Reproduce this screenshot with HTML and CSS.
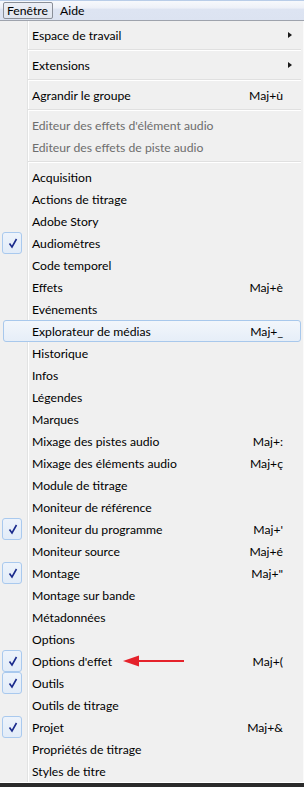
FILE: index.html
```html
<!DOCTYPE html>
<html lang="fr">
<head>
<meta charset="utf-8">
<link rel="stylesheet" href="styles.css">
</head>
<body>
<div class="menubar">
  <span class="mb-item open">Fenêtre</span>
  <span class="mb-item">Aide</span>
</div>
<div class="menu">
  <div class="item"><span class="chk"></span><span class="label">Espace de travail</span><span class="key"></span><span class="sub"><i class="tri"></i></span></div>
  <div class="sep"></div>
  <div class="item"><span class="chk"></span><span class="label">Extensions</span><span class="key"></span><span class="sub"><i class="tri"></i></span></div>
  <div class="sep"></div>
  <div class="item"><span class="chk"></span><span class="label">Agrandir le groupe</span><span class="key">Maj+ù</span><span class="sub"></span></div>
  <div class="sep"></div>
  <div class="item disabled"><span class="chk"></span><span class="label">Editeur des effets d'élément audio</span><span class="key"></span><span class="sub"></span></div>
  <div class="item disabled"><span class="chk"></span><span class="label">Editeur des effets de piste audio</span><span class="key"></span><span class="sub"></span></div>
  <div class="sep"></div>
  <div class="item"><span class="chk"></span><span class="label">Acquisition</span><span class="key"></span><span class="sub"></span></div>
  <div class="item"><span class="chk"></span><span class="label">Actions de titrage</span><span class="key"></span><span class="sub"></span></div>
  <div class="item"><span class="chk"></span><span class="label">Adobe Story</span><span class="key"></span><span class="sub"></span></div>
  <div class="item"><span class="chk on"><svg viewBox="0 0 21 22" width="21" height="22"><path d="M7.5 11.5 L10 15 L14.5 7" fill="none" stroke="#1a2a8c" stroke-width="1.6"/></svg></span><span class="label">Audiomètres</span><span class="key"></span><span class="sub"></span></div>
  <div class="item"><span class="chk"></span><span class="label">Code temporel</span><span class="key"></span><span class="sub"></span></div>
  <div class="item"><span class="chk"></span><span class="label">Effets</span><span class="key">Maj+è</span><span class="sub"></span></div>
  <div class="item"><span class="chk"></span><span class="label">Evénements</span><span class="key"></span><span class="sub"></span></div>
  <div class="item hover"><span class="chk"></span><span class="label">Explorateur de médias</span><span class="key">Maj+_</span><span class="sub"></span></div>
  <div class="item"><span class="chk"></span><span class="label">Historique</span><span class="key"></span><span class="sub"></span></div>
  <div class="item"><span class="chk"></span><span class="label">Infos</span><span class="key"></span><span class="sub"></span></div>
  <div class="item"><span class="chk"></span><span class="label">Légendes</span><span class="key"></span><span class="sub"></span></div>
  <div class="item"><span class="chk"></span><span class="label">Marques</span><span class="key"></span><span class="sub"></span></div>
  <div class="item"><span class="chk"></span><span class="label">Mixage des pistes audio</span><span class="key">Maj+:</span><span class="sub"></span></div>
  <div class="item"><span class="chk"></span><span class="label">Mixage des éléments audio</span><span class="key">Maj+ç</span><span class="sub"></span></div>
  <div class="item"><span class="chk"></span><span class="label">Module de titrage</span><span class="key"></span><span class="sub"></span></div>
  <div class="item"><span class="chk"></span><span class="label">Moniteur de référence</span><span class="key"></span><span class="sub"></span></div>
  <div class="item"><span class="chk on"><svg viewBox="0 0 21 22" width="21" height="22"><path d="M7.5 11.5 L10 15 L14.5 7" fill="none" stroke="#1a2a8c" stroke-width="1.6"/></svg></span><span class="label">Moniteur du programme</span><span class="key">Maj+'</span><span class="sub"></span></div>
  <div class="item"><span class="chk"></span><span class="label">Moniteur source</span><span class="key">Maj+é</span><span class="sub"></span></div>
  <div class="item"><span class="chk on"><svg viewBox="0 0 21 22" width="21" height="22"><path d="M7.5 11.5 L10 15 L14.5 7" fill="none" stroke="#1a2a8c" stroke-width="1.6"/></svg></span><span class="label">Montage</span><span class="key">Maj+"</span><span class="sub"></span></div>
  <div class="item"><span class="chk"></span><span class="label">Montage sur bande</span><span class="key"></span><span class="sub"></span></div>
  <div class="item"><span class="chk"></span><span class="label">Métadonnées</span><span class="key"></span><span class="sub"></span></div>
  <div class="item"><span class="chk"></span><span class="label">Options</span><span class="key"></span><span class="sub"></span></div>
  <div class="item annotated"><span class="chk on"><svg viewBox="0 0 21 22" width="21" height="22"><path d="M7.5 11.5 L10 15 L14.5 7" fill="none" stroke="#1a2a8c" stroke-width="1.6"/></svg></span><span class="label">Options d'effet</span><span class="key">Maj+(</span><span class="sub"></span>
    <svg class="red-arrow" viewBox="0 0 61 12" width="61" height="12"><line x1="12" y1="6" x2="61" y2="6" stroke="#e5222b" stroke-width="2"/><polygon points="0,6 16,0.5 16,11.5" fill="#e5222b"/></svg>
  </div>
  <div class="item"><span class="chk on"><svg viewBox="0 0 21 22" width="21" height="22"><path d="M7.5 11.5 L10 15 L14.5 7" fill="none" stroke="#1a2a8c" stroke-width="1.6"/></svg></span><span class="label">Outils</span><span class="key"></span><span class="sub"></span></div>
  <div class="item"><span class="chk"></span><span class="label">Outils de titrage</span><span class="key"></span><span class="sub"></span></div>
  <div class="item"><span class="chk on"><svg viewBox="0 0 21 22" width="21" height="22"><path d="M7.5 11.5 L10 15 L14.5 7" fill="none" stroke="#1a2a8c" stroke-width="1.6"/></svg></span><span class="label">Projet</span><span class="key">Maj+&amp;</span><span class="sub"></span></div>
  <div class="item"><span class="chk"></span><span class="label">Propriétés de titrage</span><span class="key"></span><span class="sub"></span></div>
  <div class="item"><span class="chk"></span><span class="label">Styles de titre</span><span class="key"></span><span class="sub"></span></div>
</div>
<div class="below"></div>
</body>
</html>
```
FILE: styles.css
```css
* { box-sizing: border-box; }
html, body { margin: 0; padding: 0; }
body {
  width: 304px;
  height: 787px;
  overflow: hidden;
  background: #2b2b2b;
  font-family: "Segoe UI", Lato, "Noto Sans", sans-serif;
  font-size: 12.2px;
  color: #000;
}
.menubar {
  height: 21px;
  display: flex;
  align-items: center;
  padding: 0 0 0 3px;
  gap: 3px;
  border-top: 1px solid #b9cde8;
  border-bottom: 1px solid #9ea3ad;
  background: linear-gradient(#f7f9fc 0%, #eef1f8 35%, #dde4f2 45%, #dce3f1 100%);
}
.mb-item {
  height: 17px;
  line-height: 15px;
  padding: 0 4px 0 3px;
  border: 1px solid transparent;
}
.mb-item.open {
  border-color: #8a8f98;
  border-radius: 2px;
  background: linear-gradient(#eceff6, #e0e5ef);
}
.menu {
  height: 762px;
  padding-top: 3px;
  background:
    linear-gradient(to right, transparent 27px, #e2e3e3 27px, #e2e3e3 28px, #ffffff 28px, #ffffff 29px, transparent 29px),
    #f0f0f0;
  border-right: 1px solid #fafafa;
  border-bottom: 1px solid #ffffff;
}
.item {
  position: relative;
  height: 22px;
  margin: 0 2px 0 2px;
  display: flex;
  align-items: center;
  padding-right: 8px;
  border: 1px solid transparent;
  border-radius: 3px;
}
.item.hover {
  border-color: #a8c8ec;
  background: linear-gradient(#f2f6fb, #e6eef8);
  margin-left: 3px;
}
.item.hover .chk { width: 19px; }
.chk {
  width: 20px;
  height: 22px;
  margin: 0 0 0 -1px;
  flex: none;
  border-radius: 3px;
}
.chk.on {
  border: 1px solid #a9c9ee;
  background: linear-gradient(#edf3fb, #e2ecf8);
  display: flex;
  align-items: center;
  justify-content: center;
}
.chk.on svg { flex: none; }
.label {
  flex: 1;
  margin-left: 10px;
  white-space: nowrap;
}
.disabled .label { color: #6d6d6d; }
.key {
  white-space: nowrap;
  text-align: right;
}
.sub {
  width: 9px;
  flex: none;
  display: flex;
  justify-content: flex-end;
  align-items: center;
}
.tri {
  display: block;
  width: 0;
  height: 0;
  border-top: 3.5px solid transparent;
  border-bottom: 3.5px solid transparent;
  border-left: 4px solid #1a1a1a;
}
.sep {
  height: 8px;
  margin-left: 28px;
  margin-right: 2px;
  background: linear-gradient(transparent 3px, #e0e0e0 3px, #e0e0e0 4px, #ffffff 4px, #ffffff 5px, transparent 5px);
}
.red-arrow {
  position: absolute;
  left: 120px;
  top: 4px;
}
.below {
  height: 4px;
  background: #2b2b2b;
}
```
